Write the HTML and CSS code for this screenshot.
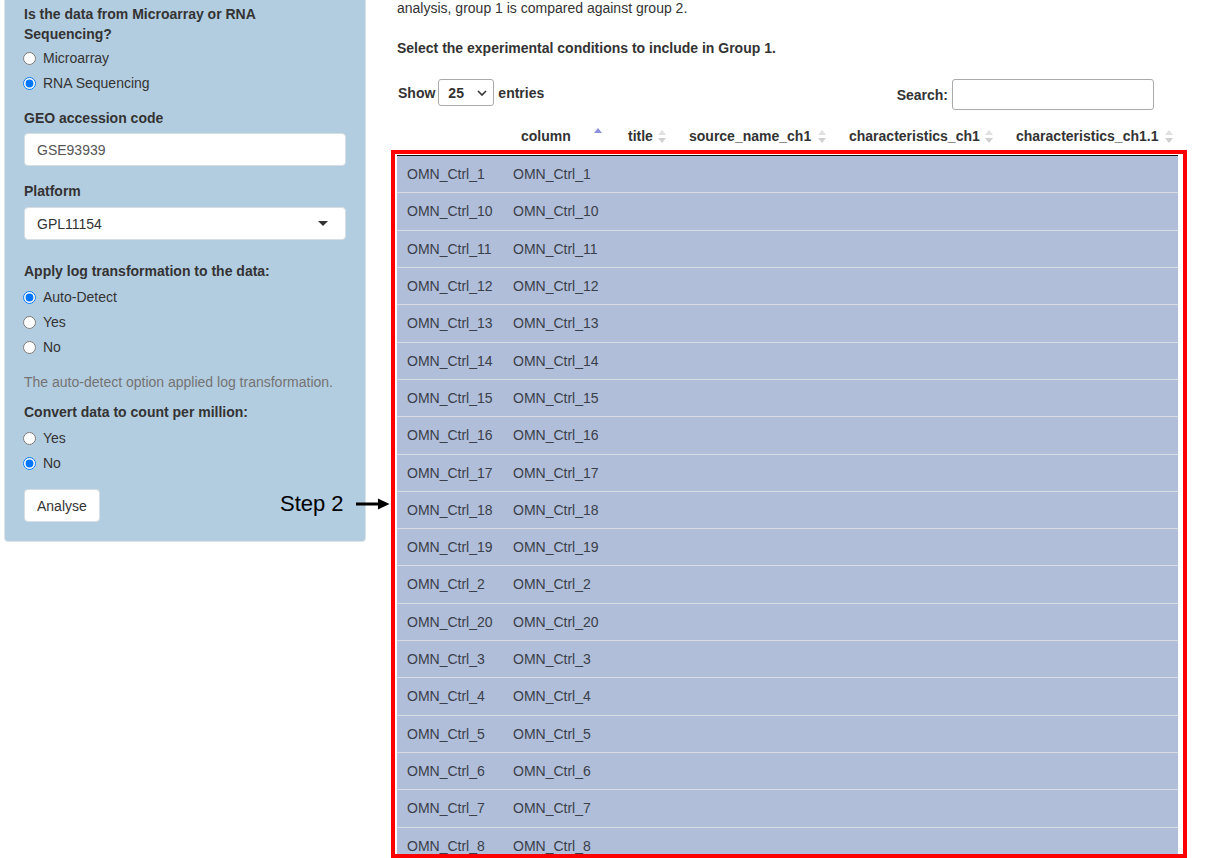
FILE: index.html
```html
<!DOCTYPE html>
<html>
<head>
<meta charset="utf-8">
<link rel="stylesheet" href="styles.css">
</head>
<body>
<div class="page">
  <aside class="well">
    <div class="form-group">
      <div class="control-label">Is the data from Microarray or RNA Sequencing?</div>
      <div class="options">
        <label class="radio"><input type="radio" name="tech"><span>Microarray</span></label>
        <label class="radio"><input type="radio" name="tech" checked><span>RNA Sequencing</span></label>
      </div>
    </div>
    <div class="form-group">
      <div class="control-label">GEO accession code</div>
      <div class="text-input">GSE93939</div>
    </div>
    <div class="form-group">
      <div class="control-label label-platform">Platform</div>
      <div class="select-input"><span>GPL11154</span><span class="caret"></span></div>
    </div>
    <div class="form-group group-log">
      <div class="control-label">Apply log transformation to the data:</div>
      <div class="options">
        <label class="radio"><input type="radio" name="log" checked><span>Auto-Detect</span></label>
        <label class="radio"><input type="radio" name="log"><span>Yes</span></label>
        <label class="radio"><input type="radio" name="log"><span>No</span></label>
      </div>
    </div>
    <p class="help">The auto-detect option applied log transformation.</p>
    <div class="form-group group-cpm">
      <div class="control-label">Convert data to count per million:</div>
      <div class="options">
        <label class="radio"><input type="radio" name="cpm"><span>Yes</span></label>
        <label class="radio"><input type="radio" name="cpm" checked><span>No</span></label>
      </div>
    </div>
    <button class="btn">Analyse</button>
  </aside>

  <main class="main">
    <p class="intro">analysis, group 1 is compared against group 2.</p>
    <p class="select-note">Select the experimental conditions to include in Group 1.</p>

    <div class="dt-controls">
      <div class="dt-length">
        <span>Show</span>
        <div class="dt-select"><span>25</span>
          <svg width="10" height="6" viewBox="0 0 10 6"><path d="M1 1 L5 5 L9 1" fill="none" stroke="#333" stroke-width="1.6"/></svg>
        </div>
        <span>entries</span>
      </div>
      <div class="dt-filter">
        <span>Search:</span>
        <div class="dt-search"></div>
      </div>
    </div>

    <table class="dt">
      <colgroup>
        <col class="c1"><col class="c2"><col class="c3"><col class="c4"><col class="c5"><col class="c6">
      </colgroup>
      <thead>
        <tr>
          <th></th>
          <th><div class="th-in"><span>column</span><svg class="sort asc" width="8" height="13" viewBox="0 0 8 13"><polygon points="0,5 4,0 8,5" fill="#8c90dc"/></svg></div></th>
          <th><div class="th-in"><span>title</span><svg class="sort" width="8" height="13" viewBox="0 0 8 13"><polygon points="0,5 4,0 8,5" fill="#e0e0e0"/><polygon points="0,8 4,13 8,8" fill="#d0d0d0"/></svg></div></th>
          <th><div class="th-in"><span>source_name_ch1</span><svg class="sort" width="8" height="13" viewBox="0 0 8 13"><polygon points="0,5 4,0 8,5" fill="#e0e0e0"/><polygon points="0,8 4,13 8,8" fill="#d0d0d0"/></svg></div></th>
          <th><div class="th-in"><span>characteristics_ch1</span><svg class="sort" width="8" height="13" viewBox="0 0 8 13"><polygon points="0,5 4,0 8,5" fill="#e0e0e0"/><polygon points="0,8 4,13 8,8" fill="#d0d0d0"/></svg></div></th>
          <th><div class="th-in"><span>characteristics_ch1.1</span><svg class="sort" width="8" height="13" viewBox="0 0 8 13"><polygon points="0,5 4,0 8,5" fill="#e0e0e0"/><polygon points="0,8 4,13 8,8" fill="#d0d0d0"/></svg></div></th>
        </tr>
      </thead>
      <tbody>
        <tr><td>OMN_Ctrl_1</td><td>OMN_Ctrl_1</td><td></td><td></td><td></td><td></td></tr>
        <tr><td>OMN_Ctrl_10</td><td>OMN_Ctrl_10</td><td></td><td></td><td></td><td></td></tr>
        <tr><td>OMN_Ctrl_11</td><td>OMN_Ctrl_11</td><td></td><td></td><td></td><td></td></tr>
        <tr><td>OMN_Ctrl_12</td><td>OMN_Ctrl_12</td><td></td><td></td><td></td><td></td></tr>
        <tr><td>OMN_Ctrl_13</td><td>OMN_Ctrl_13</td><td></td><td></td><td></td><td></td></tr>
        <tr><td>OMN_Ctrl_14</td><td>OMN_Ctrl_14</td><td></td><td></td><td></td><td></td></tr>
        <tr><td>OMN_Ctrl_15</td><td>OMN_Ctrl_15</td><td></td><td></td><td></td><td></td></tr>
        <tr><td>OMN_Ctrl_16</td><td>OMN_Ctrl_16</td><td></td><td></td><td></td><td></td></tr>
        <tr><td>OMN_Ctrl_17</td><td>OMN_Ctrl_17</td><td></td><td></td><td></td><td></td></tr>
        <tr><td>OMN_Ctrl_18</td><td>OMN_Ctrl_18</td><td></td><td></td><td></td><td></td></tr>
        <tr><td>OMN_Ctrl_19</td><td>OMN_Ctrl_19</td><td></td><td></td><td></td><td></td></tr>
        <tr><td>OMN_Ctrl_2</td><td>OMN_Ctrl_2</td><td></td><td></td><td></td><td></td></tr>
        <tr><td>OMN_Ctrl_20</td><td>OMN_Ctrl_20</td><td></td><td></td><td></td><td></td></tr>
        <tr><td>OMN_Ctrl_3</td><td>OMN_Ctrl_3</td><td></td><td></td><td></td><td></td></tr>
        <tr><td>OMN_Ctrl_4</td><td>OMN_Ctrl_4</td><td></td><td></td><td></td><td></td></tr>
        <tr><td>OMN_Ctrl_5</td><td>OMN_Ctrl_5</td><td></td><td></td><td></td><td></td></tr>
        <tr><td>OMN_Ctrl_6</td><td>OMN_Ctrl_6</td><td></td><td></td><td></td><td></td></tr>
        <tr><td>OMN_Ctrl_7</td><td>OMN_Ctrl_7</td><td></td><td></td><td></td><td></td></tr>
        <tr><td>OMN_Ctrl_8</td><td>OMN_Ctrl_8</td><td></td><td></td><td></td><td></td></tr>
        <tr><td>OMN_Ctrl_9</td><td>OMN_Ctrl_9</td><td></td><td></td><td></td><td></td></tr>
      </tbody>
    </table>
  </main>
</div>

<div class="annot-box"></div>
<div class="annot-step">
  <span>Step 2</span>
  <svg width="34" height="12" viewBox="0 0 34 12"><rect x="0" y="4.5" width="24" height="3" fill="#000"/><polygon points="22,0.5 33.5,6 22,11.5" fill="#000"/></svg>
</div>
</body>
</html>
```

FILE: styles.css
```css
html, body {
  margin: 0;
  padding: 0;
  background: #fff;
  overflow: hidden;
}
body {
  font-family: "Liberation Sans", Arial, sans-serif;
  font-size: 14px;
  line-height: 20px;
  color: #333;
}

.page {
  display: flex;
  align-items: flex-start;
  padding-left: 4px;
}

/* ---------- sidebar ---------- */
.well {
  width: 362px;
  box-sizing: border-box;
  margin-top: -16px;
  padding: 19px;
  background: #b3cde0;
  border: 1px solid #dde3e8;
  border-radius: 4px;
  flex-shrink: 0;
}
.form-group {
  margin-bottom: 15px;
}
.control-label {
  font-weight: bold;
  margin-bottom: 4px;
}
.options {
  display: flex;
  flex-direction: column;
  gap: 5px;
}
.radio {
  display: flex;
  align-items: center;
  height: 20px;
  margin-left: -1px;
}
.radio input {
  margin: 0 7px 0 0;
  width: 13px;
  height: 13px;
}
.text-input {
  margin-top: 5px;
  height: 33px;
  box-sizing: border-box;
  background: #fff;
  border: 1px solid #d6dde3;
  border-radius: 4px;
  padding: 6px 12px;
  color: #555;
}
.label-platform {
  margin-top: 2px;
  margin-bottom: 6px;
}
.select-input {
  height: 33px;
  box-sizing: border-box;
  background: #fff;
  border: 1px solid #d6dde3;
  border-radius: 4px;
  padding: 6px 17px 6px 12px;
  color: #333;
  display: flex;
  justify-content: space-between;
  align-items: center;
}
.caret {
  width: 0;
  height: 0;
  border-left: 5px solid transparent;
  border-right: 5px solid transparent;
  border-top: 5px solid #333;
}
.group-log {
  margin-top: 21px;
}
.group-log .control-label,
.group-cpm .control-label {
  margin-bottom: 6px;
}
.help {
  margin: 0 0 10px;
  color: #737373;
}
.btn {
  display: block;
  margin-top: 16px;
  height: 33px;
  padding: 0 12px;
  font-family: inherit;
  font-size: 14px;
  color: #333;
  background: #fff;
  border: 1px solid #d6dde3;
  border-radius: 4px;
}

/* ---------- main ---------- */
.main {
  margin-left: 31px;
  margin-top: -2px;
  width: 781px;
  flex-shrink: 0;
}
.intro {
  margin: 0;
}
.select-note {
  margin: 20px 0 0;
  font-weight: bold;
}
.dt-controls {
  margin-top: 21px;
  display: flex;
  justify-content: space-between;
  align-items: flex-start;
  padding-right: 24px;
  font-weight: bold;
}
.dt-length {
  display: flex;
  align-items: center;
  height: 27px;
  padding-left: 1px;
}
.dt-select {
  margin: 0 4px 0 3px;
  width: 56px;
  height: 27px;
  box-sizing: border-box;
  border: 1px solid #aaa;
  border-radius: 3px;
  display: flex;
  align-items: center;
  justify-content: space-between;
  padding: 0 6px 0 9px;
}
.dt-filter {
  display: flex;
  align-items: center;
  height: 31px;
}
.dt-search {
  margin-left: 4px;
  width: 202px;
  height: 31px;
  box-sizing: border-box;
  border: 1px solid #aaa;
  border-radius: 3px;
  background: #fff;
}

/* ---------- table ---------- */
.dt {
  margin-top: 5px;
  width: 781px;
  table-layout: fixed;
  border-collapse: collapse;
  border-spacing: 0;
}
.c1 { width: 106px; }
.c2 { width: 107px; }
.c3 { width: 61px; }
.c4 { width: 160px; }
.c5 { width: 167px; }
.c6 { width: 180px; }
.dt th {
  padding: 11px 5px 9px 18px;
  text-align: left;
  font-weight: bold;
  color: #333;
  border-bottom: 1px solid #111;
  white-space: nowrap;
}
.th-in {
  display: flex;
  justify-content: space-between;
  align-items: center;
}
.sort.asc {
  margin-right: 3px;
  margin-top: -4px;
}
.dt td {
  padding: 8px 10px;
  line-height: 20.32px;
  background: #b0bed9;
  border-top: 1px solid #d9dde6;
  white-space: nowrap;
  color: #3a3f4a;
}
.dt tbody tr:first-child td {
  border-top: none;
}

/* ---------- screenshot annotations ---------- */
.annot-box {
  position: absolute;
  left: 391px;
  top: 150px;
  width: 796px;
  height: 708px;
  box-sizing: border-box;
  border: 4px solid #ff0000;
}
.annot-step {
  position: absolute;
  left: 280px;
  top: 490px;
  display: flex;
  align-items: center;
  gap: 12px;
  font-family: "Liberation Sans", Arial, sans-serif;
  font-size: 22px;
  line-height: 28px;
  color: #000;
}
```
